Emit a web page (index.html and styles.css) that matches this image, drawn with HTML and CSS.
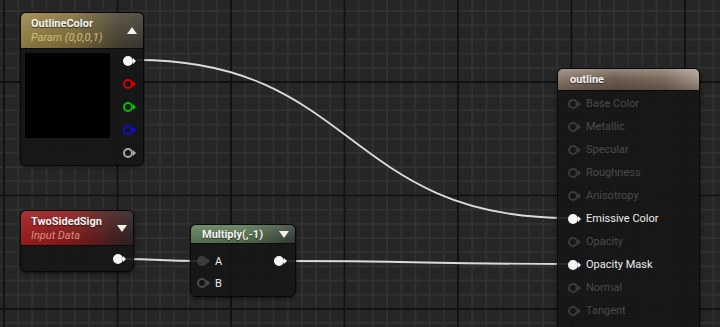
FILE: index.html
```html
<!DOCTYPE html>
<html>
<head>
    <title>Material Graph</title>
    <link rel="stylesheet" href="styles.css">
</head>
<body>
    <div class="graph">
        <svg class="wires" width="720" height="327" viewBox="0 0 720 327">
            <path d="M137 60 C 355 60, 345 218, 568 218"/>
            <path d="M122 259 C 160 259, 160 261, 198 261"/>
            <path d="M283 261 C 420 261, 430 264, 570 264"/>
        </svg>

        <!-- parameter node -->
        <div class="node n-param">
            <div class="head head-gold">
                <div class="titles">
                    <div class="title">OutlineColor</div>
                    <div class="sub sub-gold">Param (0,0,0,1)</div>
                </div>
                <svg class="tri" width="10" height="7" viewBox="0 0 10 7"><polygon points="0,7 10,7 5,0"/></svg>
            </div>
            <div class="body body-param">
                <div class="preview"></div>
                <div class="outs">
                    <div class="row"><span class="pin on pin-white"></span></div>
                    <div class="row"><span class="pin pin-red"></span></div>
                    <div class="row"><span class="pin pin-green"></span></div>
                    <div class="row"><span class="pin pin-blue"></span></div>
                    <div class="row"><span class="pin pin-grey"></span></div>
                </div>
            </div>
        </div>

        <!-- input data node -->
        <div class="node n-sign">
            <div class="head head-red">
                <div class="titles">
                    <div class="title">TwoSidedSign</div>
                    <div class="sub sub-red">Input Data</div>
                </div>
                <svg class="tri" width="10" height="7" viewBox="0 0 10 7"><polygon points="0,0 10,0 5,7"/></svg>
            </div>
            <div class="body body-sign">
                <span class="pin on pin-white"></span>
            </div>
        </div>

        <!-- multiply node -->
        <div class="node n-mul">
            <div class="head head-green">
                <div class="title">Multiply(,-1)</div>
                <svg class="tri" width="10" height="7" viewBox="0 0 10 7"><polygon points="0,0 10,0 5,7"/></svg>
            </div>
            <div class="body body-mul">
                <div class="ins">
                    <div class="row"><span class="pin on pin-dim"></span><span class="lbl">A</span></div>
                    <div class="row"><span class="pin pin-dim2"></span><span class="lbl">B</span></div>
                </div>
                <div class="row"><span class="pin on pin-white"></span></div>
            </div>
        </div>

        <!-- material result node -->
        <div class="node n-out">
            <div class="head head-brown">
                <div class="title">outline</div>
            </div>
            <div class="body body-out">
                <div class="row off"><span class="pin"></span><span class="lbl">Base Color</span></div>
                <div class="row off"><span class="pin"></span><span class="lbl">Metallic</span></div>
                <div class="row off"><span class="pin"></span><span class="lbl">Specular</span></div>
                <div class="row off"><span class="pin"></span><span class="lbl">Roughness</span></div>
                <div class="row off"><span class="pin"></span><span class="lbl">Anisotropy</span></div>
                <div class="row"><span class="pin on pin-white"></span><span class="lbl">Emissive Color</span></div>
                <div class="row off"><span class="pin"></span><span class="lbl">Opacity</span></div>
                <div class="row"><span class="pin on pin-white"></span><span class="lbl">Opacity Mask</span></div>
                <div class="row off"><span class="pin"></span><span class="lbl">Normal</span></div>
                <div class="row off"><span class="pin"></span><span class="lbl">Tangent</span></div>
            </div>
        </div>
    </div>
</body>
</html>
```

FILE: styles.css
```css
body {
    margin: 0;
    font-family: Roboto, "Liberation Sans", sans-serif;
    background-color: #262626;
}

.graph {
    position: relative;
    width: 720px;
    height: 327px;
    overflow: hidden;
    background-color: #262626;
    background-image:
        linear-gradient(to right, #121212 2px, transparent 2px),
        linear-gradient(to bottom, #121212 2px, transparent 2px),
        linear-gradient(to right, #313131 2px, transparent 2px),
        linear-gradient(to bottom, #313131 2px, transparent 2px);
    background-size: 113.5px 113.5px, 113.5px 113.5px, 14.1875px 14.1875px, 14.1875px 14.1875px;
    background-position: 3px 81px, 3px 81px, 3px 81px, 3px 81px;
}

.wires {
    position: absolute;
    left: 0;
    top: 0;
}
.wires path {
    fill: none;
    stroke: #dcdcdc;
    stroke-width: 1.8;
}

/* nodes */
.node {
    position: absolute;
    box-sizing: border-box;
    background-color: rgba(22, 22, 22, 0.9);
    border: 1px solid #080808;
    border-radius: 6px;
    box-shadow: 0 1px 4px rgba(0, 0, 0, 0.6);
    overflow: hidden;
}
.n-param { left: 20px; top: 12px; width: 124px; height: 154px; }
.n-sign { left: 20px; top: 210px; width: 114px; height: 62px; }
.n-mul { left: 190px; top: 224px; width: 106px; height: 73px; }
.n-out { left: 557px; top: 68px; width: 143px; height: 280px; }

.head {
    display: flex;
    justify-content: space-between;
    align-items: center;
    box-sizing: border-box;
    padding: 0 6px 0 10px;
    border-bottom: 1px solid #0c0c0c;
}
.head-gold {
    height: 36px;
    background: linear-gradient(to bottom, rgba(255,255,255,0.12), rgba(0,0,0,0.1)),
                linear-gradient(to right, #9a8441, #7c6b36 45%, #4a4230 80%, #3d3a31);
}
.head-red {
    height: 35px;
    background: linear-gradient(to bottom, rgba(255,255,255,0.1), rgba(0,0,0,0.1)),
                linear-gradient(to right, #a31b1b, #8a1919 45%, #4a1e1e 80%, #2f2222);
}
.head-green {
    height: 19px;
    padding-left: 11px;
    background: linear-gradient(to bottom, rgba(255,255,255,0.14), rgba(0,0,0,0.12)),
                linear-gradient(to right, #5c7c54, #587650 50%, #3f5040 85%, #353d36);
}
.head-brown {
    height: 22px;
    padding-left: 12px;
    background: linear-gradient(to bottom, rgba(255,255,255,0.25), rgba(255,255,255,0) 45%, rgba(0,0,0,0.25)),
                linear-gradient(to right, #8a7868, #6e5e50 40%, #7d6c5d 75%, #a8968a);
}

.titles {
    display: flex;
    flex-direction: column;
    gap: 1px;
}
.title {
    color: #f4f4f4;
    font-size: 11px;
    font-weight: bold;
    text-shadow: 0 1px 1px rgba(0, 0, 0, 0.6);
}
.sub {
    font-size: 11px;
    font-style: italic;
}
.sub-gold { color: #cdbb86; }
.sub-red { color: #d49286; }
.tri polygon { fill: #f0f0f0; }

/* pins */
.row {
    display: flex;
    align-items: center;
    height: 23px;
}
.pin {
    position: relative;
    box-sizing: border-box;
    width: 10px;
    height: 10px;
    border: 2px solid #3b3b3b;
    border-radius: 50%;
    margin-right: 8px;
    color: #3b3b3b;
}
.pin::after {
    content: '';
    position: absolute;
    right: -5px;
    top: 50%;
    margin-top: -3px;
    border-left: 3px solid currentColor;
    border-top: 3px solid transparent;
    border-bottom: 3px solid transparent;
}
.pin.on { background-color: currentColor; }
.pin-white { color: #f4f4f4; border-color: #f4f4f4; }
.pin-red { color: #dd0000; border-color: #dd0000; }
.pin-green { color: #00c400; border-color: #00c400; }
.pin-blue { color: #0c0ce0; border-color: #0c0ce0; }
.pin-grey { color: #a8a8a8; border-color: #a8a8a8; }
.pin-dim { color: #3d3d3d; border-color: #3d3d3d; }
.pin-dim2 { color: #4a4a4a; border-color: #4a4a4a; background-color: #141414; }
.outs .pin, .body-sign .pin, .body-mul > .row .pin { margin-right: 0; }

.lbl {
    font-size: 11px;
    color: #ececec;
}
.off .lbl { color: #4a4a4a; }

.body-param {
    display: flex;
    justify-content: space-between;
    padding: 0 10px 0 4px;
}
.preview {
    width: 85px;
    height: 85px;
    margin-top: 4px;
    background-color: #000;
}
.body-sign {
    display: flex;
    justify-content: flex-end;
    align-items: center;
    height: 26px;
    padding-right: 10px;
}
.body-mul {
    display: flex;
    justify-content: space-between;
    padding: 6px 11px 0 6px;
}
.body-mul .row { height: 22px; }
.body-out {
    padding: 1px 0 0 10px;
}
```
